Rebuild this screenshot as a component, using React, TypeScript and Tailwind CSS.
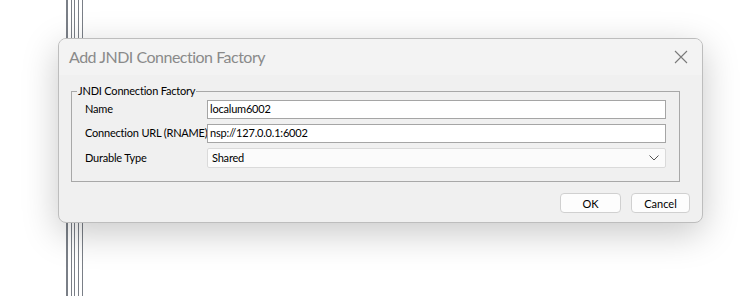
import React from "react";

const font = { fontFamily: 'Lato, "Noto Sans", sans-serif' };

export default function App() {
  const lines = [66, 67, 71, 74, 78, 82];
  return (
    <div className="relative w-[754px] h-[296px] bg-white overflow-hidden" style={font}>
      {lines.map((x) => (
        <div key={x} className="absolute top-0 bottom-0 w-px bg-[#7a7f87]" style={{ left: x }} />
      ))}
      <div className="relative pt-[38px] pl-[58px]">
        <div className="w-[645px] h-[185px] rounded-[8px] border border-[#bdbdbd] bg-[#f0f0f0] shadow-[0_10px_36px_rgba(0,0,0,0.22)] overflow-hidden flex flex-col">
          <div className="h-[36px] bg-[#f3f3f3] flex items-center justify-between pl-[10px] pr-[14px]">
            <span className="text-[16px] tracking-[-0.5px] text-[#8a8a8a] leading-none whitespace-nowrap">Add JNDI Connection Factory</span>
            <svg width="14" height="14" viewBox="0 0 14 14">
              <path d="M1 1 L13 13 M13 1 L1 13" stroke="#7a7a7a" strokeWidth="1.1" fill="none" />
            </svg>
          </div>
          <div className="flex-1 px-[12px] pt-[8px]">
            <fieldset className="border border-[#a8a8a8] w-[609px] h-[99px] px-[13px]">
              <legend className="ml-[-8px] px-[1px] text-[11px] tracking-[-0.2px] leading-[16px] text-black whitespace-nowrap">
                JNDI Connection Factory
              </legend>
              <div className="grid grid-cols-[122px_1fr] gap-y-[5px] mt-[1px] text-[11px] tracking-[-0.2px] text-black whitespace-nowrap">
                <div className="flex items-center h-[19px]">Name</div>
                <div className="h-[19px] bg-white border border-[#a5a5a5] flex items-center px-[2px] w-[459px]">localum6002</div>
                <div className="flex items-center h-[19px]">Connection URL (RNAME)</div>
                <div className="h-[19px] bg-white border border-[#a5a5a5] flex items-center px-[2px] w-[459px]">nsp://127.0.0.1:6002</div>
                <div className="flex items-center h-[20px]">Durable Type</div>
                <div className="h-[20px] bg-[#fbfbfb] border border-[#dadada] rounded-[2px] flex items-center justify-between pl-[4px] pr-[6px] w-[459px]">
                  <span>Shared</span>
                  <svg width="10" height="6" viewBox="0 0 10 6">
                    <path d="M0.5 0.5 L5 5 L9.5 0.5" stroke="#555" strokeWidth="1" fill="none" />
                  </svg>
                </div>
              </div>
            </fieldset>
            <div className="flex justify-end gap-[10px] mt-[11px]">
              <button className="w-[61px] h-[20px] rounded-[4px] border border-[#d0d0d0] bg-[#fdfdfd] text-[11px] text-black leading-none">OK</button>
              <button className="w-[59px] h-[20px] rounded-[4px] border border-[#d0d0d0] bg-[#fdfdfd] text-[11px] text-black leading-none">Cancel</button>
            </div>
          </div>
        </div>
      </div>
    </div>
  );
}
